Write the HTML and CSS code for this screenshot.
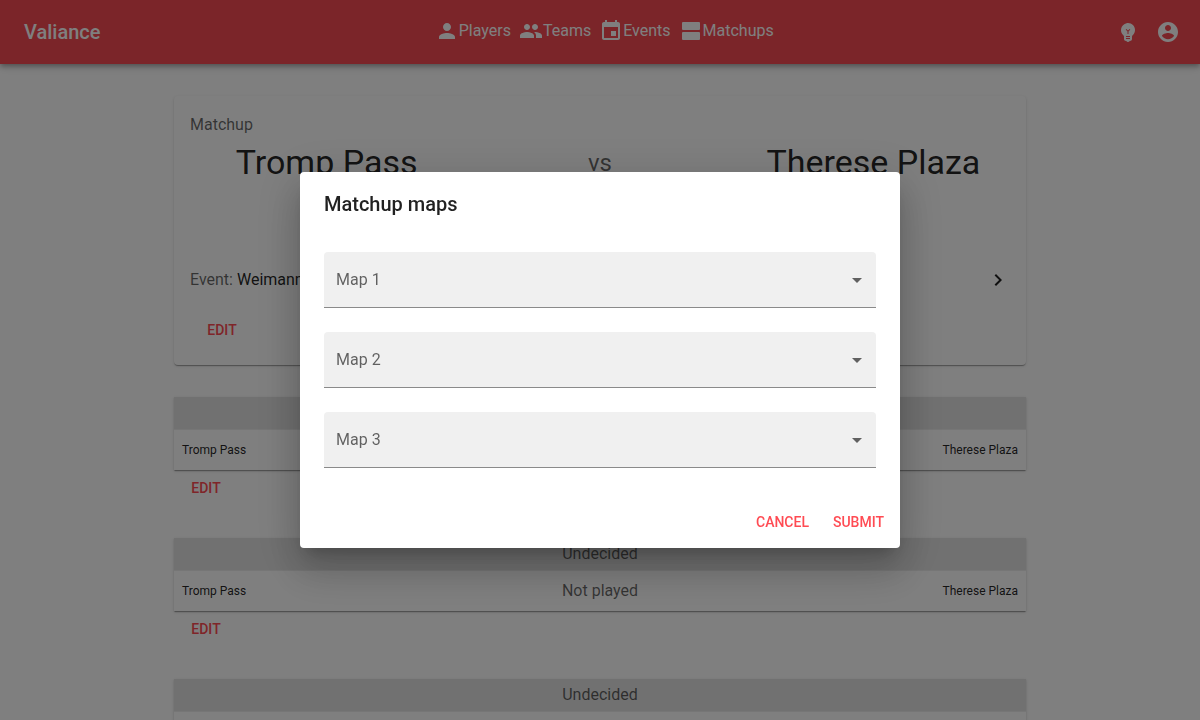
FILE: index.html
```html
<!DOCTYPE html>
<html lang="en">
<head>
<meta charset="utf-8">
<meta name="viewport" content="width=device-width, initial-scale=1">
<title>Valiance</title>
<link rel="stylesheet" href="styles.css">
</head>
<body>
<header class="app-bar">
  <a class="brand" href="#">Valiance</a>
  <nav class="nav">
    <a class="nav-link" href="#"><svg class="icon" viewBox="0 0 24 24"><path d="M12 12c2.21 0 4-1.79 4-4s-1.79-4-4-4-4 1.79-4 4 1.79 4 4 4zm0 2c-2.67 0-8 1.34-8 4v2h16v-2c0-2.66-5.33-4-8-4z"/></svg>Players</a>
    <a class="nav-link" href="#"><svg class="icon" viewBox="0 0 24 24"><path d="M16 11c1.66 0 2.99-1.34 2.99-3S17.66 5 16 5s-3 1.34-3 3 1.34 3 3 3zm-8 0c1.66 0 2.99-1.34 2.99-3S9.66 5 8 5 5 6.340 5 8s1.340 3 3 3zm0 2c-2.330 0-7 1.170-7 3.500V19h14v-2.500c0-2.330-4.670-3.500-7-3.500zm8 0c-.29 0-.62.020-.97.050 1.160.84 1.970 1.970 1.970 3.450V19h6v-2.500c0-2.330-4.670-3.500-7-3.500z"/></svg>Teams</a>
    <a class="nav-link" href="#"><svg class="icon" viewBox="0 0 24 24"><path d="M17 12h-5v5h5v-5zM16 1v2H8V1H6v2H5c-1.110 0-1.990.9-1.990 2L3 19c0 1.100.89 2 2 2h14c1.100 0 2-.9 2-2V5c0-1.100-.9-2-2-2h-1V1h-2zm3 18H5V8h14v11z"/></svg>Events</a>
    <a class="nav-link" href="#"><svg class="icon" viewBox="0 0 24 24"><rect x="3" y="3" width="18" height="8" rx="1"/><rect x="3" y="13" width="18" height="8" rx="1"/></svg>Matchups</a>
  </nav>
  <div class="tools">
    <button class="icon-button" type="button" aria-label="Toggle theme"><svg class="icon" viewBox="0 0 24 24"><path d="M12 3c-.46 0-.93.04-1.400.14-2.760.53-4.960 2.760-5.480 5.520-.48 2.610.48 5.010 2.220 6.560.43.38.66.91.66 1.470V19c0 1.100.9 2 2 2h.28c.35.6.98 1 1.720 1s1.380-.4 1.720-1H14c1.100 0 2-.9 2-2v-2.310c0-.55.22-1.090.64-1.460C18.090 13.950 19 12.080 19 10c0-3.870-3.130-7-7-7zm2 16h-4v-1h4v1zm0-2h-4v-1h4v1zm-1.500-5.590V14h-1v-2.590L9.670 9.590l.71-.71L12 10.500l1.620-1.620.71.71-1.830 1.820z"/></svg></button>
    <button class="icon-button" type="button" aria-label="Account"><svg class="icon" viewBox="0 0 24 24"><path d="M12 2C6.480 2 2 6.480 2 12s4.480 10 10 10 10-4.480 10-10S17.520 2 12 2zm0 3c1.660 0 3 1.340 3 3s-1.340 3-3 3-3-1.340-3-3 1.340-3 3-3zm0 14.200c-2.500 0-4.710-1.280-6-3.220.03-1.990 4-3.080 6-3.080 1.990 0 5.970 1.090 6 3.080-1.290 1.940-3.500 3.220-6 3.220z"/></svg></button>
  </div>
</header>

<main class="container">
  <section class="card matchup">
    <p class="muted">Matchup</p>
    <div class="teams">
      <h1 class="team">Tromp Pass</h1>
      <span class="versus">vs</span>
      <h1 class="team">Therese Plaza</h1>
    </div>
    <a class="event" href="#">
      <span><span class="muted">Event:</span> Weimann</span>
      <svg class="icon" viewBox="0 0 24 24"><path d="M10 6L8.590 7.410 13.170 12l-4.580 4.590L10 18l6-6z"/></svg>
    </a>
    <button class="button" type="button">EDIT</button>
  </section>

  <section class="map">
    <table class="card result">
      <thead><tr><th colspan="3">Undecided</th></tr></thead>
      <tbody><tr><td class="side">Tromp Pass</td><td class="score">Not played</td><td class="side side-end">Therese Plaza</td></tr></tbody>
    </table>
    <button class="button" type="button">EDIT</button>
  </section>
  <section class="map">
    <table class="card result">
      <thead><tr><th colspan="3">Undecided</th></tr></thead>
      <tbody><tr><td class="side">Tromp Pass</td><td class="score">Not played</td><td class="side side-end">Therese Plaza</td></tr></tbody>
    </table>
    <button class="button" type="button">EDIT</button>
  </section>
  <section class="map">
    <table class="card result">
      <thead><tr><th colspan="3">Undecided</th></tr></thead>
      <tbody><tr><td class="side"></td><td class="score"></td><td class="side side-end"></td></tr></tbody>
    </table>
  </section>
</main>

<div class="backdrop">
  <form class="dialog" role="dialog" aria-modal="true" aria-labelledby="dialog-title">
    <h2 class="dialog-title" id="dialog-title">Matchup maps</h2>
    <div class="fields">
      <div class="field">
        <select class="select" id="map-1"><option value=""></option></select>
        <label class="label" for="map-1">Map 1</label>
        <svg class="icon arrow" viewBox="0 0 24 24"><path d="M7 10l5 5 5-5z"/></svg>
      </div>
      <div class="field">
        <select class="select" id="map-2"><option value=""></option></select>
        <label class="label" for="map-2">Map 2</label>
        <svg class="icon arrow" viewBox="0 0 24 24"><path d="M7 10l5 5 5-5z"/></svg>
      </div>
      <div class="field">
        <select class="select" id="map-3"><option value=""></option></select>
        <label class="label" for="map-3">Map 3</label>
        <svg class="icon arrow" viewBox="0 0 24 24"><path d="M7 10l5 5 5-5z"/></svg>
      </div>
    </div>
    <div class="actions">
      <button class="button" type="button">CANCEL</button>
      <button class="button" type="submit">SUBMIT</button>
    </div>
  </form>
</div>
</body>
</html>
```
FILE: styles.css
```css
* { box-sizing: border-box; }

body {
  margin: 0;
  height: 100vh;
  overflow: hidden;
  background: #fefefe;
  color: rgba(0, 0, 0, 0.87);
  font: 16px/24px Roboto, sans-serif;
}

h1, h2, p { margin: 0; font-weight: 400; }
a { color: inherit; text-decoration: none; }
button, select { font-family: inherit; }

.icon {
  width: 24px;
  height: 24px;
  flex: none;
  fill: currentColor;
}

.muted { color: rgba(0, 0, 0, 0.6); }

/* App bar */
.app-bar {
  position: relative;
  display: flex;
  align-items: center;
  justify-content: space-between;
  height: 64px;
  padding: 0 12px 0 24px;
  background: #f64a52;
  color: #fff;
  box-shadow: 0 2px 4px -1px rgba(0, 0, 0, 0.2), 0 4px 5px rgba(0, 0, 0, 0.14), 0 1px 10px rgba(0, 0, 0, 0.12);
}

.brand { font-size: 20px; font-weight: 500; }
.nav { display: flex; gap: 8px; padding-bottom: 2px; }
.nav-link { display: flex; align-items: center; }
.tools { display: flex; }

.icon-button {
  display: flex;
  padding: 8px;
  border: 0;
  background: none;
  color: inherit;
}

/* Page */
.container {
  max-width: 900px;
  margin: 0 auto;
  padding: 32px 24px;
  display: grid;
  gap: 32px;
}

.card {
  background: #fff;
  border-radius: 4px;
  box-shadow: 0 2px 1px -1px rgba(0, 0, 0, 0.2), 0 1px 1px rgba(0, 0, 0, 0.14), 0 1px 3px rgba(0, 0, 0, 0.12);
}

.matchup { padding: 17px 16px; }

.teams {
  display: grid;
  grid-template-columns: repeat(3, 1fr);
  align-items: start;
  min-height: 119px;
  padding-top: 4px;
  text-align: center;
}

.team { font-size: 34px; line-height: 42px; }
.versus { font-size: 24px; line-height: 44px; color: rgba(0, 0, 0, 0.6); }

.event {
  display: flex;
  align-items: center;
  justify-content: space-between;
  height: 48px;
  margin-bottom: 8px;
}

.button {
  min-width: 64px;
  height: 36px;
  padding: 0 8px;
  border: 0;
  border-radius: 4px;
  background: none;
  color: #ff4b53;
  font-size: 14px;
  font-weight: 500;
  line-height: 24px;
}

.result {
  width: 100%;
  border-radius: 0;
  border-spacing: 0;
  table-layout: fixed;
}

.result th {
  height: 33px;
  padding: 0;
  border-bottom: 1px solid #ececec;
  background: #e2e2e2;
  color: rgba(0, 0, 0, 0.6);
  font-weight: 400;
}

.result td { height: 40px; padding: 0 8px; }
.result .side { font-size: 12px; }
.side-end { text-align: right; }
.score { color: rgba(0, 0, 0, 0.6); text-align: center; }

/* Dialog */
.backdrop {
  position: fixed;
  inset: 0;
  display: flex;
  align-items: center;
  justify-content: center;
  background: rgba(0, 0, 0, 0.5);
}

.dialog {
  width: 100%;
  max-width: 600px;
  border-radius: 4px;
  background: #fff;
  box-shadow: 0 11px 15px -7px rgba(0, 0, 0, 0.2), 0 24px 38px 3px rgba(0, 0, 0, 0.14), 0 9px 46px 8px rgba(0, 0, 0, 0.12);
}

.dialog-title {
  padding: 16px 24px;
  font-size: 20px;
  font-weight: 500;
  line-height: 32px;
}

.fields {
  display: grid;
  gap: 24px;
  padding: 16px 24px 28px;
}

.field { position: relative; }

.select {
  display: block;
  width: 100%;
  height: 56px;
  padding: 0 32px 0 12px;
  appearance: none;
  border: 0;
  border-bottom: 1px solid #8a8a8a;
  border-radius: 4px 4px 0 0;
  background: #f0f0f0;
  font-size: 16px;
}

.label, .arrow {
  position: absolute;
  top: 16px;
  color: rgba(0, 0, 0, 0.6);
  pointer-events: none;
}

.label { left: 12px; }
.arrow { right: 7px; }

.actions {
  display: flex;
  justify-content: flex-end;
  gap: 8px;
  padding: 8px;
}
```
